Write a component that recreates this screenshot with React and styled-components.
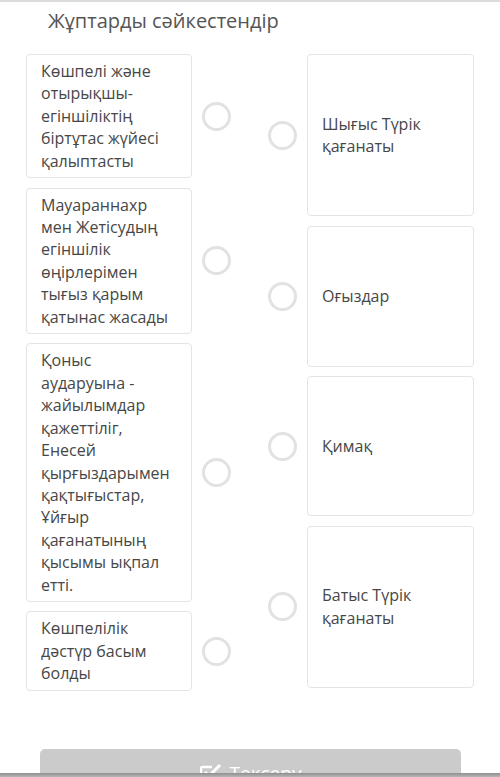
import React from "react";
import styled, { createGlobalStyle } from "styled-components";

const GlobalStyle = createGlobalStyle`
  html, body {
    margin: 0;
    padding: 0;
    background: #fff;
    font-family: "Open Sans", "Noto Sans", sans-serif;
  }
`;

const leftItems = [
  "Көшпелі және отырықшы-егіншіліктің біртұтас жүйесі қалыптасты",
  "Мауараннахр мен Жетісудың егіншілік өңірлерімен тығыз қарым қатынас жасады",
  "Қоныс аударуына - жайылымдар қажеттіліг, Енесей қырғыздарымен қақтығыстар, Ұйғыр қағанатының қысымы ықпал етті.",
  "Көшпелілік дәстүр басым болды",
];

const rightItems = [
  { text: "Шығыс Түрік қағанаты", height: 162 },
  { text: "Оғыздар", height: 141 },
  { text: "Қимақ", height: 140 },
  { text: "Батыс Түрік қағанаты", height: 162 },
];

const App = () => {
  return (
    <Page>
      <GlobalStyle />
      <TopLine />
      <Title>Жұптарды сәйкестендір</Title>

      <Board>
        <Column>
          {leftItems.map((text, i) => (
            <Row key={i}>
              <LeftCard>{text}</LeftCard>
              <Dot />
            </Row>
          ))}
        </Column>
        <Column>
          {rightItems.map((item, i) => (
            <Row key={i}>
              <Dot />
              <RightCard h={item.height}>{item.text}</RightCard>
            </Row>
          ))}
        </Column>
      </Board>

      <CheckButton>
        <svg width="22" height="20" viewBox="0 0 22 20">
          <path
            d="M15 10v6.5a1.5 1.5 0 0 1-1.5 1.5h-11A1.5 1.5 0 0 1 1 16.5v-11A1.5 1.5 0 0 1 2.5 4H12"
            fill="none"
            stroke="#fff"
            strokeWidth="2.4"
          />
          <path d="M5 9l4 4L20 2" fill="none" stroke="#fff" strokeWidth="3" />
        </svg>
        Тексеру
      </CheckButton>
      <BottomEdge />
    </Page>
  );
};

const Page = styled.div`
  width: 500px;
  height: 777px;
  overflow: hidden;
  position: relative;
`;

const TopLine = styled.div`
  height: 2px;
  background: #dcdcdc;
`;

const Title = styled.div`
  padding: 5px 0 0 48px;
  height: 46px;
  box-sizing: border-box;
  font-size: 20px;
  color: #555;
`;

const Board = styled.div`
  display: flex;
  justify-content: space-between;
  padding: 6px 26px 0 26px;
`;

const Column = styled.div`
  display: flex;
  flex-direction: column;
  gap: 9.5px;
`;

const Row = styled.div`
  display: flex;
  align-items: center;
  gap: 10px;
`;

const Dot = styled.div`
  width: 23px;
  height: 23px;
  border: 3px solid #e2e2e2;
  border-radius: 50%;
  flex-shrink: 0;
`;

const Card = styled.div`
  box-sizing: border-box;
  border: 1px solid #e4e4e4;
  border-radius: 4px;
  background: #fff;
  font-size: 16px;
  line-height: 22.4px;
  color: #474747;
`;

const LeftCard = styled(Card)`
  width: 166px;
  padding: 5px 14px;
`;

const RightCard = styled(Card)`
  width: 167px;
  height: ${(p) => p.h}px;
  padding: 0 14px;
  display: flex;
  align-items: center;
`;

const CheckButton = styled.div`
  margin: 58px 39px 0 40px;
  height: 48px;
  border-radius: 5px;
  background: #cbcbcb;
  color: #fff;
  font-size: 19px;
  display: flex;
  align-items: center;
  justify-content: center;
  gap: 8px;
`;

const BottomEdge = styled.div`
  position: absolute;
  left: 0;
  right: 0;
  bottom: 0;
  height: 4px;
  background: linear-gradient(#8f8f8f, #b5b5b5);
`;

export default App;
